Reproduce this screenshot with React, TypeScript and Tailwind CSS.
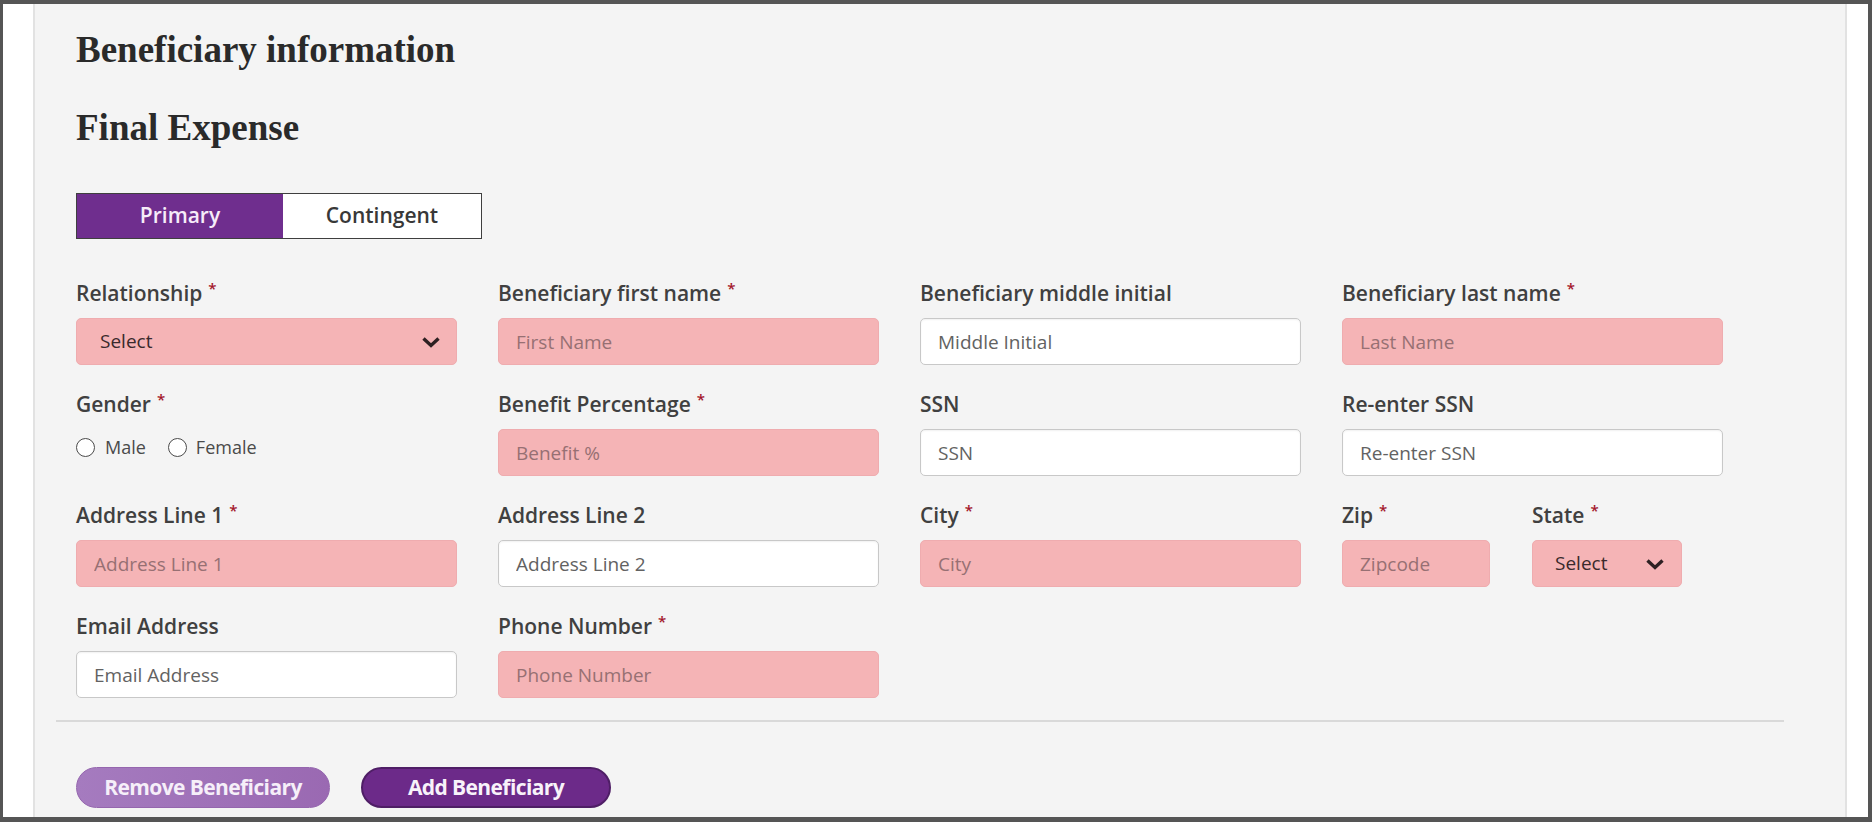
import React from "react"

type Field = {
  label: string
  required?: boolean
  kind: "pink" | "white" | "select" | "gender"
  placeholder?: string
}

const rows: Field[][] = [
  [
    { label: "Relationship", required: true, kind: "select" },
    { label: "Beneficiary first name", required: true, kind: "pink", placeholder: "First Name" },
    { label: "Beneficiary middle initial", kind: "white", placeholder: "Middle Initial" },
    { label: "Beneficiary last name", required: true, kind: "pink", placeholder: "Last Name" },
  ],
  [
    { label: "Gender", required: true, kind: "gender" },
    { label: "Benefit Percentage", required: true, kind: "pink", placeholder: "Benefit %" },
    { label: "SSN", kind: "white", placeholder: "SSN" },
    { label: "Re-enter SSN", kind: "white", placeholder: "Re-enter SSN" },
  ],
  [
    { label: "Address Line 1", required: true, kind: "pink", placeholder: "Address Line 1" },
    { label: "Address Line 2", kind: "white", placeholder: "Address Line 2" },
    { label: "City", required: true, kind: "pink", placeholder: "City" },
  ],
  [
    { label: "Email Address", kind: "white", placeholder: "Email Address" },
    { label: "Phone Number", required: true, kind: "pink", placeholder: "Phone Number" },
  ],
]

function Chevron() {
  return (
    <svg width="20" height="12" viewBox="0 0 20 12" fill="none">
      <path d="M2.5 2.5l7.5 7 7.5-7" stroke="#2e2022" strokeWidth="3.4" strokeLinejoin="miter" />
    </svg>
  )
}

function Label({ text, required }: { text: string; required?: boolean }) {
  return (
    <div className="h-[28px] leading-[28px] text-[21px] font-semibold text-[#404040] whitespace-nowrap">
      {text}
      {required && <span className="relative -top-[7px] ml-[6px] text-[15px] text-[#a3162b]">*</span>}
    </div>
  )
}

function Control({ field }: { field: Field }) {
  if (field.kind === "gender") {
    return (
      <div className="mt-[11px] flex h-[36px] items-center text-[18px] text-[#4a4a4a]">
        <span className="h-[19px] w-[19px] rounded-full border-[1.5px] border-[#4a4a4a] bg-white" />
        <span className="ml-[10px]">Male</span>
        <span className="ml-[22px] h-[19px] w-[19px] rounded-full border-[1.5px] border-[#4a4a4a] bg-white" />
        <span className="ml-[9px]">Female</span>
      </div>
    )
  }
  if (field.kind === "select") {
    return (
      <div className="mt-[11px] flex h-[47px] items-center justify-between rounded-[5px] border border-[#efacaf] bg-[#f5b4b6] pl-[23px] pr-[15px] text-[19px] text-[#3a2a2c]">
        <span>Select</span>
        <Chevron />
      </div>
    )
  }
  const pink = field.kind === "pink"
  return (
    <input
      placeholder={field.placeholder}
      className={`mt-[11px] h-[47px] w-full rounded-[5px] px-[17px] text-[19px] outline-none ${
        pink
          ? "border border-[#efacaf] bg-[#f5b4b6] placeholder:text-[#977073]"
          : "border border-[#c8c8c8] bg-white shadow-[inset_0_1px_2px_rgba(0,0,0,0.06)] placeholder:text-[#626262]"
      }`}
    />
  )
}

export default function App() {
  return (
    <div className="h-[822px] w-[1872px] bg-[#555555] pb-[5px] pl-[3px] pr-[4px] pt-[4px] font-['Open_Sans',sans-serif]">
      <div className="flex h-full bg-white">
        <div className="w-[30px] shrink-0" />

        <main className="w-[1814px] shrink-0 overflow-hidden border-x-2 border-[#e2e2e2] bg-[#f4f4f4] pl-[41px] pt-[24px]">
          <h1 className="font-['Liberation_Serif',serif] text-[37px] font-bold leading-[44px] text-[#2a2a2a]">
            Beneficiary information
          </h1>
          <h2 className="mt-[34px] font-['Liberation_Serif',serif] text-[37px] font-bold leading-[44px] text-[#2a2a2a]">
            Final Expense
          </h2>

          {/* Primary / Contingent toggle */}
          <div className="mt-[43px] flex h-[46px] w-[406px] border-[1.5px] border-[#3f3f3f]">
            <button className="w-[206px] bg-[#6f2e8e] text-[21px] font-semibold text-[#f6ecf9]">Primary</button>
            <button className="flex-1 bg-white text-[21px] font-semibold text-[#383838]">Contingent</button>
          </div>

          {/* Form rows */}
          <div className="mt-[40px] flex flex-col gap-y-[25px]">
            {rows.map((row, i) => (
              <div key={i} className="flex gap-x-[41px]">
                {row.map((field) => (
                  <div key={field.label} className="flex w-[381px] flex-col">
                    <Label text={field.label} required={field.required} />
                    <Control field={field} />
                  </div>
                ))}
                {i === 2 && (
                  <div className="flex gap-x-[42px]">
                    <div className="flex w-[148px] flex-col">
                      <Label text="Zip" required />
                      <input
                        placeholder="Zipcode"
                        className="mt-[11px] h-[47px] w-full rounded-[5px] border border-[#efacaf] bg-[#f5b4b6] px-[17px] text-[19px] outline-none placeholder:text-[#977073]"
                      />
                    </div>
                    <div className="flex w-[150px] flex-col">
                      <Label text="State" required />
                      <div className="mt-[11px] flex h-[47px] items-center justify-between rounded-[5px] border border-[#efacaf] bg-[#f5b4b6] pl-[22px] pr-[16px] text-[19px] text-[#3a2a2c]">
                        <span>Select</span>
                        <Chevron />
                      </div>
                    </div>
                  </div>
                )}
              </div>
            ))}
          </div>

          <div className="-ml-[20px] mt-[22px] h-[2px] w-[1728px] bg-[#d9d9d9]" />

          <div className="mt-[45px] flex gap-x-[31px]">
            <button className="h-[41px] w-[254px] rounded-full border border-[#9566ae] bg-gradient-to-r from-[#a57bbf] to-[#9a69b2] text-[21px] font-bold tracking-[-0.6px] text-[#f6eff9]">
              Remove Beneficiary
            </button>
            <button className="h-[41px] w-[250px] rounded-full border-2 border-[#4f1e66] bg-[#6c2a89] text-[21px] font-bold tracking-[-0.6px] text-[#f8f2fa]">
              Add Beneficiary
            </button>
          </div>
        </main>

        <div className="flex-1" />
      </div>
    </div>
  )
}
